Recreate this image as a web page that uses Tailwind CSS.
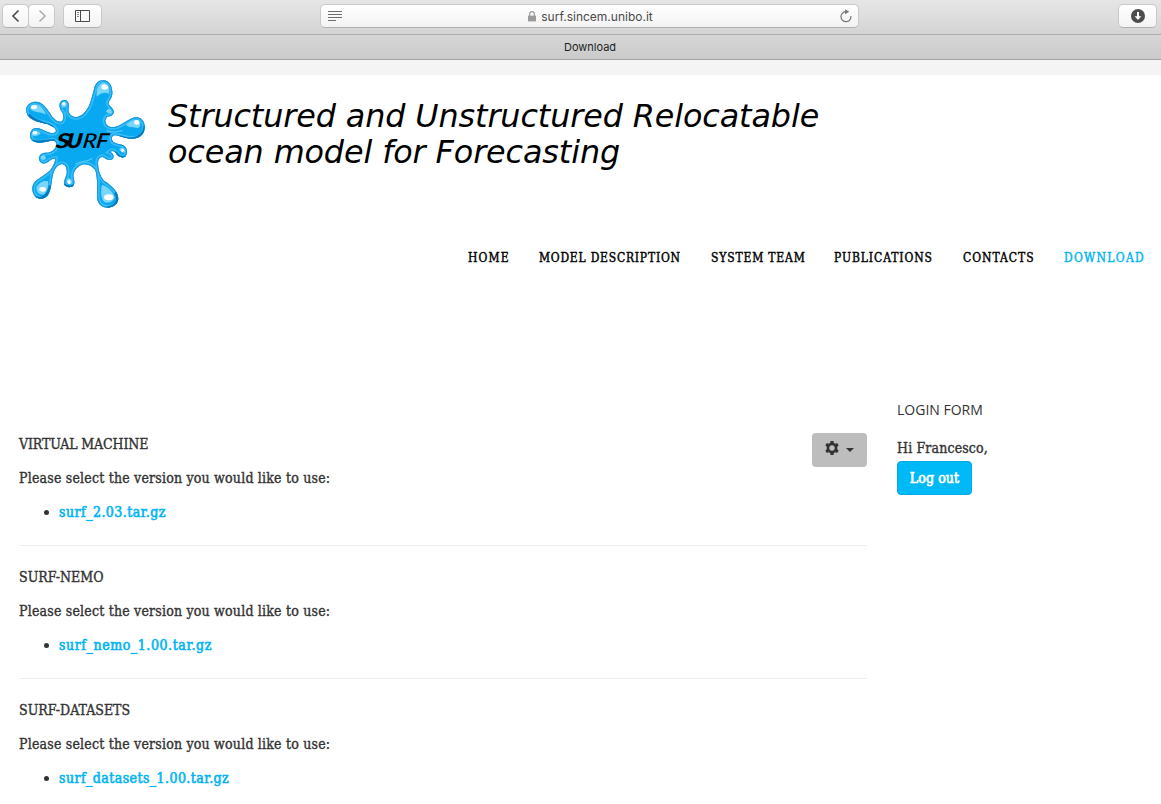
<!DOCTYPE html>
<html lang="en">
<head>
<meta charset="utf-8">
<title>Download</title>
<script src="https://cdn.jsdelivr.net/npm/@tailwindcss/browser@4"></script>
</head>
<body class="h-[804px] w-[1161px] overflow-hidden bg-white font-['DejaVu_Serif_Condensed','DejaVu_Serif',serif] text-sm leading-[18px] text-[#333]">
<!-- Browser toolbar -->
<div class="flex h-[35px] items-start border-b border-[#acacac] bg-linear-to-b from-[#e6e6e6] to-[#d4d4d4] pt-1 pr-1 pl-[2px] font-[Inter,sans-serif]">
  <div class="flex">
    <div class="flex h-6 w-[27px] items-center justify-center rounded-[5px] border border-[#c9c9c9] border-b-[#b0b0b0] bg-linear-to-b from-white to-[#f3f3f3]"><svg class="size-4" viewBox="0 0 16 16" fill="none" stroke="#4a4a4a" stroke-width="1.6"><path d="M10.500 2.500 5 8l5.500 5.500"/></svg></div>
    <div class="-ml-px flex h-6 w-[27px] items-center justify-center rounded-[5px] border border-[#c9c9c9] border-b-[#b0b0b0] bg-linear-to-b from-white to-[#f3f3f3]"><svg class="size-4" viewBox="0 0 16 16" fill="none" stroke="#adadad" stroke-width="1.6"><path d="M5.500 2.500 11 8l-5.500 5.500"/></svg></div>
    <div class="ml-2 flex h-6 w-[39px] items-center justify-center rounded-[5px] border border-[#c9c9c9] border-b-[#b0b0b0] bg-linear-to-b from-white to-[#f3f3f3]"><svg class="h-3 w-[15px]" viewBox="0 0 15 12" fill="none" stroke="#4a4a4a"><path d="M.5.5h14v11H.5zM5.500 1v10"/><path d="M2 2.500h2M2 4.500h2M2 6.500h2" stroke="#888"/></svg></div>
  </div>
  <div class="ml-[218px] flex h-6 w-[539px] items-center rounded-[5px] border border-[#c9c9c9] border-b-[#b0b0b0] bg-linear-to-b from-white to-[#f3f3f3] pr-[5px] pl-[7px]">
    <svg class="h-[11px] w-[14px]" viewBox="0 0 14 11" stroke="#6f6f6f"><path d="M0 .5h14M0 3.500h14M0 6.500h14M0 9.500h8"/></svg>
    <div class="flex flex-1 items-center justify-center pt-px text-xs text-[#4a4a4a]">
      <svg class="mr-[5px] mb-px h-[11px] w-2" viewBox="0 0 8 11"><path d="M0 4.600h8V10.400H0z" fill="#9a9a9a"/><path d="M1.700 5V2.900a2.300 2.300 0 0 1 4.600 0V5" fill="none" stroke="#9a9a9a" stroke-width="1.100"/></svg>
      <span>surf.sincem.unibo.it</span>
    </div>
    <svg class="size-[14px]" viewBox="0 0 14 14"><path d="M6.800 2.700A5 5 0 1 0 11.900 7" fill="none" stroke="#777" stroke-width="1.200"/><path d="M6 .2 10.300 2.700 6 5.200z" fill="#777"/></svg>
  </div>
  <div class="ml-auto flex h-6 w-[39px] items-center justify-center rounded-[5px] border border-[#c9c9c9] border-b-[#b0b0b0] bg-linear-to-b from-white to-[#f3f3f3]"><svg class="size-[14px]" viewBox="0 0 14 14"><circle cx="7" cy="7" r="7" fill="#4d4d4d"/><path d="M6 3h2v4.200h2.400L7 11 3.600 7.200H6z" fill="#fff"/></svg></div>
</div>
<div class="h-[25px] border-b border-[#a3a3a3] bg-linear-to-b from-[#d6d6d6] to-[#cacaca] pl-[19px] text-center font-[Inter,sans-serif] text-[11px] leading-6 text-[#1f1f1f]">Download</div>
<div class="h-[15px] bg-[#f4f4f4]"></div>

<!-- Site header -->
<header class="flex h-[165px] items-start pl-[10px]">
  <svg class="h-[140px] w-[150px] shrink-0" viewBox="0 15 450 420">
    <defs>
      <path id="splat" d="M252 58C256 38 268 30 280 31C298 32 308 48 307 72C306 84 298 90 295 100C297 108 308 112 311 124C312 136 302 140 292 140C284 148 284 156 290 164C296 172 306 172 318 170C335 165 350 150 370 143C390 137 406 152 404 174C402 198 384 208 360 206C338 204 330 196 312 196C304 198 304 210 310 216C320 222 330 222 340 226C352 232 354 250 346 260C336 266 324 260 318 250C312 242 305 242 300 246C310 250 313 258 309 266C302 272 290 270 284 264C276 258 266 262 264 276C264 300 270 320 284 334C304 346 326 366 325 388C322 406 306 414 290 413C268 410 260 394 261 372C262 346 262 320 256 300C246 288 232 280 216 284C200 290 190 304 190 318C192 330 196 340 190 348C182 354 168 352 163 344C160 332 168 322 170 312C172 296 168 284 156 282C140 284 132 300 128 318C124 336 124 360 114 376C106 388 88 390 76 380C64 368 64 346 76 334C92 320 112 312 124 296C132 284 136 272 136 266C124 264 118 276 106 280C96 282 88 276 87 266C88 252 98 248 110 248C122 248 134 240 138 230C142 216 134 210 122 212C106 216 84 222 70 214C56 206 58 184 70 176C84 170 96 180 108 184C120 190 134 192 138 184C138 172 124 168 112 162C90 156 64 154 52 134C42 112 56 96 76 95C98 96 108 112 120 130C130 148 146 160 156 154C164 142 160 130 152 120C146 106 148 94 160 90C172 88 178 98 176 112C172 130 184 142 200 142C218 138 232 122 240 100C246 84 248 72 252 58Z"/>
      <clipPath id="inside"><use href="#splat"/></clipPath>
    </defs>
    <use href="#splat" fill="#08a9f1"/>
    <g clip-path="url(#inside)" fill="none">
      <use href="#splat" stroke="#35bdf8" stroke-width="16"/>
      <use href="#splat" stroke="#1796dc" stroke-width="6"/>
      <path d="M56 134C74 158 104 156 130 172M66 212C90 222 112 208 134 212M76 382C100 392 116 372 120 346M292 413C320 410 328 388 316 368M330 200C368 216 402 200 404 170M190 346C180 354 166 350 163 342M346 260C334 266 322 256 316 246" stroke="#0879bd" stroke-width="8"/>
    </g>
    <g fill="#7bd6fb">
      <path d="M260 64C264 44 274 37 284 40C297 44 300 58 296 72C286 64 272 70 260 80Z"/>
      <path d="M60 116C64 104 76 101 86 106C96 112 104 124 108 134C92 124 76 130 60 116Z"/>
      <path d="M348 164C362 152 376 146 386 152C394 160 392 170 384 174C370 170 356 174 348 164Z"/>
      <path d="M66 188C72 180 84 182 92 190C86 198 74 200 66 196Z"/>
      <path d="M154 102C158 94 168 94 170 102C170 110 162 116 156 110Z"/>
      <path d="M80 350C88 336 104 330 114 334C116 350 112 366 100 374C86 374 76 364 80 350Z"/>
      <path d="M276 344C290 348 310 364 314 382C310 396 296 402 282 396C272 382 272 362 276 344Z"/>
      <path d="M170 330C176 320 186 326 186 338C182 346 172 344 170 330Z"/>
      <path d="M288 124C294 112 304 116 306 128C300 132 294 132 288 124Z"/>
      <path d="M328 236C336 230 346 236 346 246C338 250 330 246 328 236ZM92 262C98 252 106 254 108 264C104 272 94 272 92 262Z"/>
    </g>
    <g fill="#fff">
      <ellipse cx="284" cy="51" rx="10" ry="8"/><ellipse cx="72" cy="111" rx="9" ry="6"/><ellipse cx="380" cy="157" rx="8" ry="7"/><ellipse cx="75" cy="188" rx="7" ry="5"/><ellipse cx="161" cy="101" rx="5" ry="4"/><ellipse cx="98" cy="358" rx="10" ry="7"/><ellipse cx="296" cy="382" rx="14" ry="9"/><ellipse cx="177" cy="336" rx="5" ry="6"/><ellipse cx="338" cy="241" rx="4" ry="4"/>
    </g>
    <path d="M290 182C308 190 320 184 338 182M246 264C240 276 220 270 196 282" fill="none" stroke="#6fd2fb" stroke-width="4" opacity=".7"/>
    <g transform="translate(0 234) skewX(-8)" font-family="Lato, sans-serif" font-style="italic" font-size="61" fill="#000"><text x="136" y="0" font-weight="900" textLength="42" lengthAdjust="spacingAndGlyphs">S</text><text x="168" y="0" font-weight="800" textLength="46" lengthAdjust="spacingAndGlyphs">U</text><text x="216" y="0" font-weight="500" textLength="42" lengthAdjust="spacingAndGlyphs">R</text><text x="256" y="0" font-weight="600" textLength="38" lengthAdjust="spacingAndGlyphs">F</text></g>
  </svg>
  <h1 class="mt-[23px] ml-2 font-['DejaVu_Sans',sans-serif] text-[31.8px] leading-9 tracking-[-0.1px] whitespace-nowrap text-black italic">Structured and Unstructured Relocatable<br>ocean model for Forecasting</h1>
</header>

<nav class="flex h-[35px] items-center pl-[468px] text-xs whitespace-nowrap text-black [-webkit-text-stroke:0.4px]">
  <a class="w-[71px] tracking-[1.1px]">HOME</a>
  <a class="w-[172px] tracking-[0.77px]">MODEL DESCRIPTION</a>
  <a class="w-[123px] tracking-[0.83px]">SYSTEM TEAM</a>
  <a class="w-[129px] tracking-[0.9px]">PUBLICATIONS</a>
  <a class="w-[101px] tracking-[0.98px]">CONTACTS</a>
  <a class="tracking-[1.3px] text-[#00b4f4]">DOWNLOAD</a>
</nav>

<!-- Content -->
<div class="flex pt-[125px] pl-[19px] whitespace-nowrap [-webkit-text-stroke:0.35px]">
  <main class="w-[848px] pt-[33px]">
    <section class="flex h-[113px] justify-between border-b border-[#eee]">
      <div class="flex flex-col gap-4 pt-[2px]">
        <p class="tracking-[-0.13px]">VIRTUAL MACHINE</p>
        <p class="tracking-[0.2px]">Please select the version you would like to use:</p>
        <p class="flex items-center pl-[25px]"><span class="mr-[10px] size-[5px] rounded-full bg-[#333]"></span><a class="tracking-[0.47px] text-[#00b4f4] [-webkit-text-stroke:0.6px]">surf_2.03.tar.gz</a></p>
      </div>
      <button class="flex h-[34px] w-[55px] items-center gap-[7px] rounded-[4px] bg-[#bdbdbd] pb-1 pl-[13px]">
        <svg class="size-[14px]" viewBox="0 0 14 14" fill="#333"><path fill-rule="evenodd" d="M5.600 0h2.800l.5 2 1.300.7 2-.6L13.600 4.500 12.200 6v2l1.400 1.500-1.400 2.400-2-.6-1.300.7-.5 2H5.600l-.5-2-1.300-.7-2 .6L.4 9.500 1.800 8V6L.4 4.500 1.800 2.100l2 .6L5.100 2zM7 4.300a2.700 2.700 0 1 0 0 5.400 2.700 2.700 0 0 0 0-5.400z"/></svg>
        <svg class="mt-[3px] h-1 w-2" viewBox="0 0 8 4" fill="#333"><path d="M0 0h8L4 4z"/></svg>
      </button>
    </section>
    <section class="flex h-[133px] flex-col gap-4 border-b border-[#eee] pt-[22px]">
      <p>SURF-NEMO</p>
      <p class="tracking-[0.2px]">Please select the version you would like to use:</p>
      <p class="flex items-center pl-[25px]"><span class="mr-[10px] size-[5px] rounded-full bg-[#333]"></span><a class="tracking-[0.58px] text-[#00b4f4] [-webkit-text-stroke:0.6px]">surf_nemo_1.00.tar.gz</a></p>
    </section>
    <section class="flex flex-col gap-4 pt-[22px]">
      <p>SURF-DATASETS</p>
      <p class="tracking-[0.2px]">Please select the version you would like to use:</p>
      <p class="flex items-center pl-[25px]"><span class="mr-[10px] size-[5px] rounded-full bg-[#333]"></span><a class="tracking-[0.44px] text-[#00b4f4] [-webkit-text-stroke:0.6px]">surf_datasets_1.00.tar.gz</a></p>
    </section>
  </main>
  <aside class="ml-[30px]">
    <h3 class="font-['Open_Sans',sans-serif] leading-5 [-webkit-text-stroke:0]">LOGIN FORM</h3>
    <p class="mt-[19px] tracking-[0.15px]">Hi Francesco,</p>
    <button class="mt-1 h-[34px] w-[75px] rounded-[4px] border border-[#00a8e6] bg-[#00b9f7] pb-px text-sm tracking-[0.1px] text-white [-webkit-text-stroke:0.7px]">Log out</button>
  </aside>
</div>
</body>
</html>
